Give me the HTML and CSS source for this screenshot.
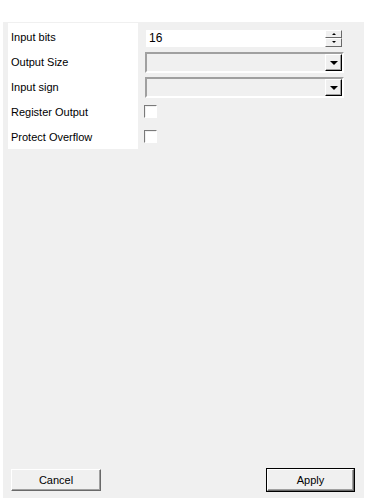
FILE: index.html
```html
<!DOCTYPE html>
<html lang="en">
<head>
    <meta charset="UTF-8">
    <meta name="viewport" content="width=device-width, initial-scale=1.0">
    <title>Settings</title>
    <link rel="stylesheet" href="styles.css">
</head>
<body>
    <div class="dialog">
        <div class="form">
            <div class="labels">
                <div class="row">Input bits</div>
                <div class="row">Output Size</div>
                <div class="row">Input sign</div>
                <div class="row">Register Output</div>
                <div class="row">Protect Overflow</div>
            </div>
            <div class="controls">
                <div class="row">
                    <div class="spin">
                        <span class="spin-value">16</span>
                        <div class="spin-buttons">
                            <span class="spin-btn"><i class="arrow-up"></i></span>
                            <span class="spin-btn"><i class="arrow-down"></i></span>
                        </div>
                    </div>
                </div>
                <div class="row">
                    <div class="combo"><span class="combo-btn"><i class="arrow-down big"></i></span></div>
                </div>
                <div class="row">
                    <div class="combo"><span class="combo-btn"><i class="arrow-down big"></i></span></div>
                </div>
                <div class="row check-row"><span class="check"></span></div>
                <div class="row check-row"><span class="check"></span></div>
            </div>
        </div>

        <div class="actions">
            <button class="btn">Cancel</button>
            <button class="btn default">Apply</button>
        </div>
    </div>
</body>
</html>
```

FILE: styles.css
```css
body {
    margin: 0;
    background: #fff;
    font-family: 'Liberation Sans', Arial, sans-serif;
    font-size: 11px;
    color: #000;
}

.dialog {
    margin: 22px 4px 0 3px;
    height: 476px;
    background: #f0f0f0;
    display: flex;
    flex-direction: column;
    justify-content: space-between;
}

.form {
    display: flex;
    gap: 6px;
    padding: 1px 0 0 5px;
}

.labels {
    width: 130px;
    background: #fff;
    padding-top: 2px;
    height: 124px;
}

.labels .row {
    height: 25px;
    line-height: 25px;
    padding-left: 3px;
}

.controls {
    width: 200px;
    padding-top: 1px;
}

.controls .row {
    height: 25px;
    display: flex;
    align-items: center;
}

/* numeric spinner */
.spin {
    margin: 3px 0 0 2px;
    width: 196px;
    height: 17px;
    background: #fff;
    display: flex;
    align-items: center;
    justify-content: space-between;
}

.spin-value {
    padding-left: 3px;
    font-size: 12px;
}

.spin-buttons {
    display: flex;
    flex-direction: column;
    width: 17px;
    height: 17px;
}

.spin-btn {
    flex: 1;
    display: flex;
    align-items: center;
    justify-content: center;
    background: #f0f0f0;
    border: 1px solid;
    border-color: #fff #696969 #696969 #fff;
}

/* combo box */
.combo {
    margin: 2px 0 0 1px;
    width: 199px;
    height: 21px;
    box-sizing: border-box;
    border: 2px solid;
    border-color: #a0a0a0 #fff #fff #a0a0a0;
    background: #f0f0f0;
    display: flex;
    justify-content: flex-end;
    align-items: center;
}

.combo-btn {
    width: 17px;
    height: 17px;
    box-sizing: border-box;
    border: 1px solid;
    border-color: #fff #000 #000 #fff;
    box-shadow: inset -1px -1px 0 #a0a0a0;
    background: #f0f0f0;
    display: flex;
    align-items: center;
    justify-content: center;
}

.arrow-up,
.arrow-down {
    display: block;
    width: 0;
    height: 0;
    border-left: 2px solid transparent;
    border-right: 2px solid transparent;
}

.arrow-up {
    border-bottom: 2px solid #000;
}

.arrow-down {
    border-top: 2px solid #000;
}

.arrow-down.big {
    border-left-width: 4px;
    border-right-width: 4px;
    border-top-width: 4px;
}

/* checkbox */
.check-row {
    align-items: flex-start;
}

.check {
    display: block;
    margin-top: 0;
    width: 13px;
    height: 13px;
    box-sizing: border-box;
    border: 1px solid;
    border-color: #7a7a7a #fff #fff #7a7a7a;
    background: #fff;
    box-shadow: inset 1px 1px 0 #f0f0f0;
}

/* bottom buttons */
.actions {
    display: flex;
    justify-content: space-between;
    padding: 0 10px 7px 8px;
}

.btn {
    width: 90px;
    height: 22px;
    font-family: 'Liberation Sans', Arial, sans-serif;
    font-size: 11px;
    color: #000;
    background: #f0f0f0;
    border: 1px solid;
    border-color: #fff #696969 #696969 #fff;
    box-shadow: inset -1px -1px 0 #a0a0a0;
    padding: 0;
}

.btn.default {
    width: 87px;
    outline: 1px solid #000;
    outline-offset: 0;
}
```
